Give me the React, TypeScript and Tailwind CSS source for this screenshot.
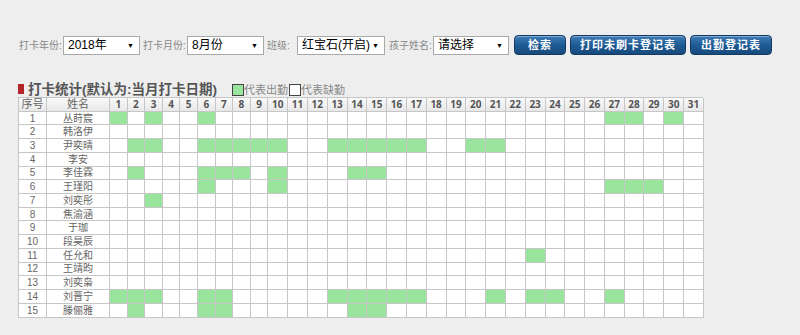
import React from 'react';

type Kid = { no: number; name: string; days: number[] };

const kids: Kid[] = [
  { no: 1, name: '丛莳宸', days: [1, 3, 6, 27, 28, 30] },
  { no: 2, name: '韩洛伊', days: [] },
  { no: 3, name: '尹奕晴', days: [2, 3, 6, 7, 8, 9, 10, 13, 14, 15, 16, 17, 20, 21] },
  { no: 4, name: '李安', days: [] },
  { no: 5, name: '李佳霖', days: [2, 6, 7, 8, 10, 14, 15] },
  { no: 6, name: '王瑾阳', days: [6, 10, 27, 28, 29] },
  { no: 7, name: '刘奕彤', days: [3] },
  { no: 8, name: '焦渝涵', days: [] },
  { no: 9, name: '于珈', days: [] },
  { no: 10, name: '段昊辰', days: [] },
  { no: 11, name: '任允和', days: [23] },
  { no: 12, name: '王靖昀', days: [] },
  { no: 13, name: '刘奕枭', days: [] },
  { no: 14, name: '刘晋宁', days: [1, 2, 3, 6, 7, 13, 14, 15, 16, 17, 21, 23, 24, 27] },
  { no: 15, name: '滕俪雅', days: [2, 6, 7, 14, 15] },
];

const days = Array.from({ length: 31 }, (_, i) => i + 1);

const cjk = "font-['Liberation_Sans','Noto_Sans_CJK_SC',sans-serif]";

function Select({ value, w }: { value: string; w: string }) {
  return (
    <div className={`${w} shrink-0 h-[19px] bg-white border border-[#a9a9a9] flex items-center justify-between pl-[4px] pr-[5px] text-[12px] text-black`}>
      <span className="whitespace-nowrap">{value}</span>
      <span className="text-[7px] leading-none">▼</span>
    </div>
  );
}

function Btn({ label, w }: { label: string; w: string }) {
  return (
    <div className={`${w} shrink-0 h-[20px] rounded-[4px] border border-[#123a63] bg-gradient-to-b from-[#3f7db8] via-[#1f5b94] to-[#174a7c] text-white text-[11px] font-bold tracking-[1px] flex items-center justify-center shadow-[inset_0_1px_0_rgba(255,255,255,0.35)]`}>
      {label}
    </div>
  );
}

function Label({ text, cls }: { text: string; cls: string }) {
  return <span className={`${cls} shrink-0 whitespace-nowrap text-[10px] overflow-visible`}>{text}</span>;
}

export default function App() {
  return (
    <div className={`w-[800px] h-[335px] bg-[#eeeeee] overflow-hidden ${cjk}`}>
      <div className="flex items-center pt-[35px] pl-[19px] text-[#888]">
        <Label text="打卡年份:" cls="w-[44px]" />
        <Select value="2018年" w="w-[77px]" />
        <Label text="打卡月份:" cls="w-[44px] ml-[3px]" />
        <Select value="8月份" w="w-[77px]" />
        <Label text="班级:" cls="w-[30px] ml-[3px]" />
        <Select value="红宝石(开启)" w="w-[88px]" />
        <Label text="孩子姓名:" cls="w-[44px] ml-[4px]" />
        <Select value="请选择" w="w-[76px]" />
        <div className="ml-[5px] flex gap-[4px]">
          <Btn label="检索" w="w-[52px]" />
          <Btn label="打印未刷卡登记表" w="w-[116px]" />
          <Btn label="出勤登记表" w="w-[82px]" />
        </div>
      </div>

      <div className="flex items-end pl-[18px] mt-[25px] h-[17px]">
        <span className="w-[6px] h-[10px] bg-[#b3262b] mb-[3px] mr-[4px]" />
        <span className="text-[13.5px] font-bold text-[#555] leading-none mb-[1px]">打卡统计(默认为:当月打卡日期)</span>
        <span className="ml-[15px] w-[12px] h-[12px] border border-[#444] bg-[#9ae59d] mb-[1px]" />
        <span className="text-[11px] text-[#888] leading-none mb-[1px]">代表出勤</span>
        <span className="ml-[1px] w-[12px] h-[12px] border border-[#444] bg-white mb-[1px]" />
        <span className="text-[11px] text-[#888] leading-none mb-[1px]">代表缺勤</span>
      </div>

      <div className="ml-[18px] w-[685px] border-l border-t border-[#c6c6c6] grid grid-cols-[28px_63px_repeat(9,17.6px)_repeat(22,19.8px)] auto-rows-[13.73px] text-[10px] text-[#666]">
        <div className="h-[14px] border-r border-b border-[#c6c6c6] bg-gradient-to-b from-[#fafafa] to-[#e8e8e8] flex items-center justify-center text-[11px]">序号</div>
        <div className="h-[14px] border-r border-b border-[#c6c6c6] bg-gradient-to-b from-[#fafafa] to-[#e8e8e8] flex items-center justify-center text-[11px]">姓名</div>
        {days.map((d) => (
          <div key={d} className="h-[14px] border-r border-b border-[#c6c6c6] bg-gradient-to-b from-[#fafafa] to-[#e8e8e8] flex items-center justify-center font-['Open_Sans',sans-serif] font-bold text-[10px] text-[#555]">
            {d}
          </div>
        ))}
        {kids.map((k) => (
          <React.Fragment key={k.no}>
            <div className="border-r border-b border-[#c6c6c6] bg-white flex items-center justify-center">{k.no}</div>
            <div className="border-r border-b border-[#c6c6c6] bg-white flex items-center justify-center">{k.name}</div>
            {days.map((d) => (
              <div
                key={d}
                className={`border-r border-b border-[#c6c6c6] ${k.days.includes(d) ? 'bg-[#9ae59d]' : 'bg-white'}`}
              />
            ))}
          </React.Fragment>
        ))}
      </div>
    </div>
  );
}
